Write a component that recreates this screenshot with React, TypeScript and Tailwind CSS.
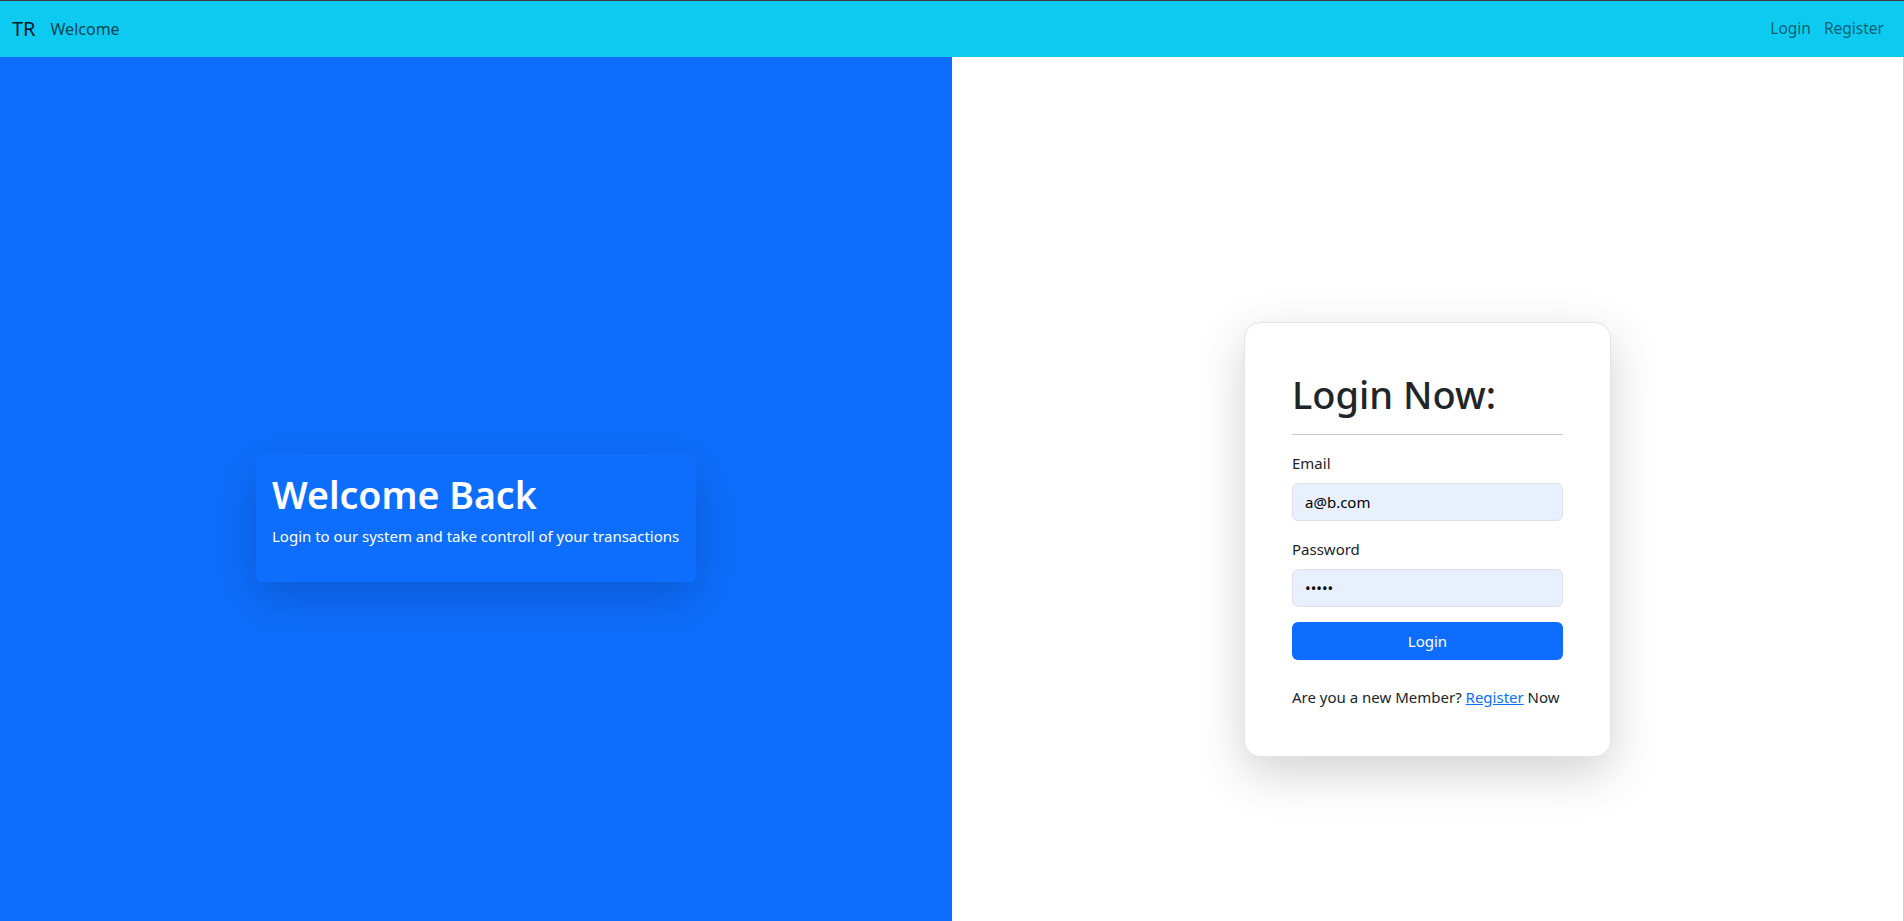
import React, { useState } from 'react';

const font = { fontFamily: '"Noto Sans", "Open Sans", Roboto, sans-serif' };

/**
 * Login page: cyan navbar on top, blue welcome half on the left,
 * white half with the login card on the right.
 */
export default function App() {
  const [email, setEmail] = useState('a@b.com');
  const [password, setPassword] = useState('12345');

  return (
    <div className="min-h-screen bg-white border-t border-[#3a3a3a]" style={font}>
      {/* Navbar */}
      <nav className="h-[56px] bg-[#0dcaf0] flex items-center justify-between pl-[12px] pr-[20px]">
        <div className="flex items-center">
          <span className="text-[20px] text-black/90 mr-[15px]">TR</span>
          <span className="text-[16px] text-black/70">Welcome</span>
        </div>
        <div className="flex items-center gap-[13px] text-[15.5px] text-black/55">
          <span>Login</span>
          <span>Register</span>
        </div>
      </nav>

      <div className="flex">
        {/* Left half */}
        <div className="w-1/2 h-[921px] bg-[#0d6efd] flex items-center justify-center">
          <div className="w-[440px] h-[128px] bg-[#0d6efd] rounded-md shadow-[0_16px_48px_rgba(0,0,0,0.18)] px-4 pt-[18px]">
            <h1 className="text-[37.5px] leading-[1.2] font-semibold text-white">Welcome Back</h1>
            <p className="text-[15px] text-white mt-[8px]">
              Login to our system and take controll of your transactions
            </p>
          </div>
        </div>

        {/* Right half */}
        <div className="w-1/2 h-[921px] flex justify-center pt-[265px] border-r border-[#d0d0d0]">
          <div className="w-[367px] h-[435px] bg-white rounded-2xl border border-[#e3e3e3] shadow-[0_16px_48px_rgba(0,0,0,0.18)] px-[47px] pt-[47px]">
            <h2 className="text-[38px] leading-[48px] font-medium text-[#212529]">Login Now:</h2>
            <hr className="mt-[16px] border-t border-[#c8c8c8]" />

            <label htmlFor="email" className="block mt-[16px] text-[15px] leading-[24px] text-[#212529]">
              Email
            </label>
            <input
              id="email"
              type="email"
              value={email}
              onChange={(e) => setEmail(e.target.value)}
              className="mt-[8px] w-full h-[38px] px-[12px] text-[15px] text-black bg-[#e8f0fe] border border-[#dee2e6] rounded-md outline-none"
            />

            <label htmlFor="password" className="block mt-[16px] text-[15px] leading-[24px] text-[#212529]">
              Password
            </label>
            <input
              id="password"
              type="password"
              value={password}
              onChange={(e) => setPassword(e.target.value)}
              className="mt-[8px] w-full h-[38px] px-[12px] text-[15px] text-black bg-[#e8f0fe] border border-[#dee2e6] rounded-md outline-none"
            />

            <button
              type="button"
              className="mt-[15px] w-full h-[38px] bg-[#0d6efd] text-white text-[15px] rounded-md"
            >
              Login
            </button>

            <p className="mt-[25px] text-[15px] leading-[24px] text-[#212529]">
              Are you a new Member?{' '}
              <a href="#" className="text-[#0d6efd] underline">Register</a> Now
            </p>
          </div>
        </div>
      </div>
    </div>
  );
}
